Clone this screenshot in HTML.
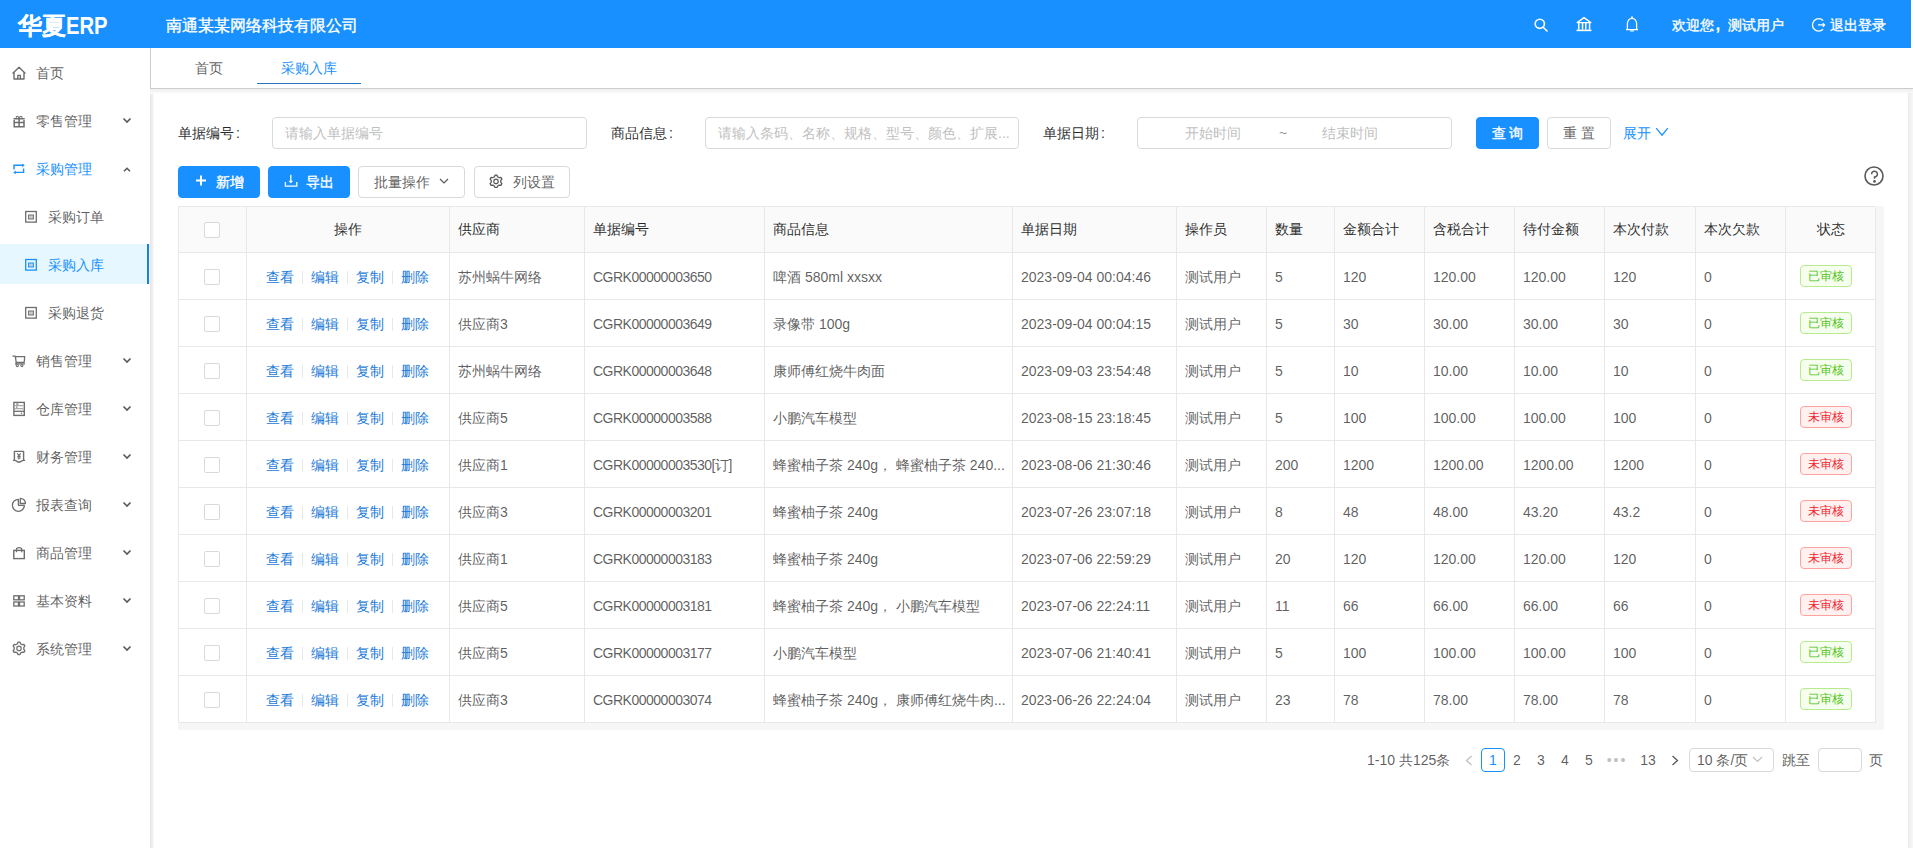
<!DOCTYPE html><html><head><meta charset="utf-8"><style>
*{box-sizing:border-box;margin:0;padding:0}
html,body{width:1913px;height:848px;overflow:hidden;background:#fff;font-family:"Liberation Sans", sans-serif;font-size:14px;color:rgba(0,0,0,.65)}
.abs{position:absolute}
.hdr{left:0;top:0;width:1911px;height:48px;background:#1890ff;color:#fff}
.logo{left:18px;top:11px;font-size:22px;font-weight:bold;line-height:30px;white-space:nowrap}
.company{left:166px;top:15px;font-size:16px;line-height:22px;white-space:nowrap;-webkit-text-stroke:0.35px #fff}
.htxt{top:15px;font-size:14px;line-height:20px;white-space:nowrap;-webkit-text-stroke:0.35px #fff}
.side{left:0;top:48px;width:150px;height:800px;background:#fff}
.mi{left:0;width:150px;height:40px;line-height:40px;white-space:nowrap;color:rgba(0,0,0,.65)}
.mi .ic{position:absolute;left:12px;top:13px;width:14px;height:15px;overflow:visible}
.mi .tx{position:absolute;left:36px;top:1px}
.mi .ar{position:absolute;left:122px;top:16px;width:10px;height:8px;overflow:visible}
.mi.sub .ic{left:24px}
.mi.sub .tx{left:48px}
.mi.act{background:#e6f7ff;color:#1890ff}
.mi.act:after{content:"";position:absolute;right:1px;top:0;width:2px;height:40px;background:#1c7fe0}
.tabs{left:150px;top:48px;width:1763px;height:41px;background:#fff;border-left:1px solid #ccc;border-bottom:1px solid #ccc}
.tab{top:10px;font-size:14px;line-height:20px;white-space:nowrap}
.content{left:151px;top:89px;width:1762px;height:759px;background:#f2f2f2}
.card{left:154px;top:93px;width:1754px;height:755px;background:#fff}
.lbl{top:123px;line-height:20px;color:rgba(0,0,0,.85);white-space:nowrap}
.inp{top:117px;height:32px;border:1px solid #d9d9d9;border-radius:4px;background:#fff}
.ph{position:absolute;top:5px;line-height:20px;color:#bfbfbf;white-space:nowrap}
.btn{height:32px;border-radius:4px;line-height:30px;text-align:center;white-space:nowrap;font-size:14px}
.btn.pri{background:#1890ff;border:1px solid #1890ff;color:#fff;-webkit-text-stroke:0.35px #fff}
.btn.def{background:#fff;border:1px solid #d9d9d9;color:rgba(0,0,0,.65)}
.tbl{left:178px;top:206px}
.cell{position:absolute;border-right:1px solid #e8e8e8;border-bottom:1px solid #e8e8e8;white-space:nowrap;overflow:hidden;line-height:20px}
.th{background:#fafafa;color:rgba(0,0,0,.85)}
.cb{position:absolute;width:16px;height:16px;border:1px solid #d9d9d9;border-radius:2px;background:#fff}
.lnk{color:#1a7ad9}
.dv{display:inline-block;width:1px;height:13px;background:#e8e8e8;margin:0 8px;vertical-align:-2px}
.tag{position:absolute;height:22px;width:52px;line-height:20px;font-size:12px;text-align:center;border-radius:4px;border:1px solid}
.tag.ok{color:#52c41a;background:#f6ffed;border-color:#b7eb8f}
.tag.no{color:#f5222d;background:#fff1f0;border-color:#ffa39e}
.pg{top:750px;line-height:20px;white-space:nowrap;color:rgba(0,0,0,.65)}
</style></head><body>
<div class="abs hdr">
<div class="abs logo"><span style="font-size:24px;font-weight:900;-webkit-text-stroke:0.15px #fff">华夏</span><span style="display:inline-block;font-size:23px;transform:scaleX(0.88);transform-origin:0 0">ERP</span></div>
<div class="abs company">南通某某网络科技有限公司</div>
<svg class="abs" style="left:1534px;top:18px" width="14" height="14" viewBox="0 0 14 14" fill="none" stroke="#fff" stroke-width="1.6"><circle cx="5.8" cy="5.8" r="4.6"/><path d="M9.2 9.2L13 13" stroke-linecap="round"/></svg>
<svg class="abs" style="left:1576px;top:16px" width="16" height="16" viewBox="0 0 16 16" fill="#fff"><path d="M1.2 6.6L8 1.6L14.8 6.6Z" fill="none" stroke="#fff" stroke-width="1.4" stroke-linejoin="round"/><rect x="2" y="7" width="1.5" height="6.6"/><rect x="5.8" y="7" width="1.5" height="6.6"/><rect x="9" y="7" width="1.5" height="6.6"/><rect x="12.8" y="7" width="1.5" height="6.6"/><rect x="0.6" y="13.6" width="14.8" height="1.6"/></svg>
<svg class="abs" style="left:1625px;top:16px" width="14" height="17" viewBox="0 0 14 17" fill="none" stroke="#fff" stroke-width="1.3"><circle cx="7" cy="1.2" r="0.9" fill="#fff" stroke="none"/><path d="M2.4 13.3V7.6A4.6 5.2 0 0 1 11.6 7.6V13.3 M1 13.7H13" stroke-linejoin="round"/><rect x="5.2" y="14.2" width="3.6" height="1.5" fill="rgba(255,255,255,.75)" stroke="none"/></svg>
<div class="abs htxt" style="left:1672px">欢迎您<span style="display:inline-block;width:14px;padding-left:2px;font-weight:bold">,</span>测试用户</div>
<svg class="abs" style="left:1811px;top:18px" width="15" height="14" viewBox="0 0 15 14" fill="none" stroke="#fff" stroke-width="1.3"><path d="M12.08 2.52A6.2 6.2 0 1 0 12.08 11.28"/><path d="M7 6.9H13.6 M11.7 5.1L13.6 6.9L11.7 8.7" stroke-width="1.2"/></svg>
<div class="abs htxt" style="left:1830px">退出登录</div>
</div>
<div class="abs side">
<div class="abs mi" style="top:4px"><svg class="ic" viewBox="0 0 14 15" fill="none" stroke="#6e6e6e" stroke-width="1.2"><path d="M0.6 8.6L7 2.2L13.4 8.6 M2 7.6V14H12V7.6 M5.8 14V10.4H8.4V14" stroke-linejoin="round" stroke-width="1.4"/></svg><span class="tx">首页</span></div>
<div class="abs mi" style="top:52px"><svg class="ic" viewBox="0 0 14 15" fill="none" stroke="#6e6e6e" stroke-width="1.2"><path d="M1.5 5.8H12.7 M2.2 7V13.8H12V7 M7.1 5.2V13.8 M2.2 9.6H12" stroke-width="1.5"/><path d="M7.1 5C6.2 2.6 3.8 2.6 4.4 4.9 M7.1 5C8 2.6 10.4 2.6 9.8 4.9" stroke-width="1.1"/></svg><span class="tx">零售管理</span><svg class="ar" viewBox="0 0 10 8" fill="none" stroke="#595959" stroke-width="1.6"><path d="M1.5 2.5L5 6L8.5 2.5"/></svg></div>
<div class="abs mi" style="top:100px;color:#1890ff"><svg class="ic" viewBox="0 0 14 15" fill="none" stroke="#1890ff" stroke-width="1.2"><path d="M2 8.6V4.3H10.6 M11.6 7.4V11.4H3.4" stroke-width="1.4"/><path d="M10.2 2.4L12.8 4.3L10.2 6.2Z M3.8 9.5L1.2 11.4L3.8 13.3Z" fill="#1890ff" stroke="none"/></svg><span class="tx">采购管理</span><svg class="ar" viewBox="0 0 10 8" fill="none" stroke="#595959" stroke-width="1.6"><path d="M2 7.3L5 4.3L8 7.3"/></svg></div>
<div class="abs mi sub" style="top:148px"><svg class="ic" viewBox="0 0 14 15" fill="none" stroke="#6e6e6e" stroke-width="1.2"><rect x="1.7" y="2.5" width="10.6" height="10.6" stroke-width="1.3"/><rect x="4.6" y="6" width="4.8" height="4" stroke-width="1" fill="#ccc"/></svg><span class="tx">采购订单</span></div>
<div class="abs mi sub act" style="top:196px;color:#1890ff"><svg class="ic" viewBox="0 0 14 15" fill="none" stroke="#1890ff" stroke-width="1.2"><rect x="1.7" y="2.5" width="10.6" height="10.6" stroke-width="1.3"/><rect x="4.6" y="6" width="4.8" height="4" stroke-width="1" fill="#ccc"/></svg><span class="tx">采购入库</span></div>
<div class="abs mi sub" style="top:244px"><svg class="ic" viewBox="0 0 14 15" fill="none" stroke="#6e6e6e" stroke-width="1.2"><rect x="1.7" y="2.5" width="10.6" height="10.6" stroke-width="1.3"/><rect x="4.6" y="6" width="4.8" height="4" stroke-width="1" fill="#ccc"/></svg><span class="tx">采购退货</span></div>
<div class="abs mi" style="top:292px"><svg class="ic" viewBox="0 0 14 15" fill="none" stroke="#6e6e6e" stroke-width="1.2"><path d="M0.5 3.1H3.3L4.4 10.9 M3.6 3.6H12.7L12.2 9.3H4.5 M3 10.9H13" stroke-width="1.3" stroke-linejoin="round"/><circle cx="5.3" cy="12.6" r="1.1" stroke-width="1.1"/><circle cx="9.9" cy="12.6" r="1.1" stroke-width="1.1"/></svg><span class="tx">销售管理</span><svg class="ar" viewBox="0 0 10 8" fill="none" stroke="#595959" stroke-width="1.6"><path d="M1.5 2.5L5 6L8.5 2.5"/></svg></div>
<div class="abs mi" style="top:340px"><svg class="ic" viewBox="0 0 14 15" fill="none" stroke="#6e6e6e" stroke-width="1.2"><rect x="1.9" y="1.4" width="10.4" height="13" stroke-width="1.4"/><path d="M1.9 10.3H12.3" stroke-width="1.3"/><path d="M2.8 4.6H11.4 M2.8 7.6H11.4" stroke="#aaa" stroke-width="1.1"/><path d="M4 3.1H6.6 M4 6.1H5.6" stroke-width="1"/><circle cx="9.4" cy="12.3" r="0.7" fill="#6e6e6e" stroke="none"/></svg><span class="tx">仓库管理</span><svg class="ar" viewBox="0 0 10 8" fill="none" stroke="#595959" stroke-width="1.6"><path d="M1.5 2.5L5 6L8.5 2.5"/></svg></div>
<div class="abs mi" style="top:388px"><svg class="ic" viewBox="0 0 14 15" fill="none" stroke="#6e6e6e" stroke-width="1.2"><path d="M2.4 11.4V2.4H11.6V11.4 M0.9 11.4H2.4C4.5 11.6 5.5 13.2 7 13.2C8.5 13.2 9.5 11.6 11.6 11.4H13.1" stroke-width="1.4" stroke-linejoin="round"/><path d="M5.3 4.3L7 6.6L8.7 4.3 M5.4 7.4H8.6 M5.4 9H8.6 M7 6.6V10.4" stroke-width="1.1"/></svg><span class="tx">财务管理</span><svg class="ar" viewBox="0 0 10 8" fill="none" stroke="#595959" stroke-width="1.6"><path d="M1.5 2.5L5 6L8.5 2.5"/></svg></div>
<div class="abs mi" style="top:436px"><svg class="ic" viewBox="0 0 14 15" fill="none" stroke="#6e6e6e" stroke-width="1.2"><path d="M6.4 2.3A6 6 0 1 0 12.4 8.3H6.4Z" stroke-width="1.3" stroke-linejoin="round"/><path d="M8.3 1.3V6.5H13.5A5.2 5.2 0 0 0 8.3 1.3Z" stroke-width="1.3" stroke-linejoin="round"/></svg><span class="tx">报表查询</span><svg class="ar" viewBox="0 0 10 8" fill="none" stroke="#595959" stroke-width="1.6"><path d="M1.5 2.5L5 6L8.5 2.5"/></svg></div>
<div class="abs mi" style="top:484px"><svg class="ic" viewBox="0 0 14 15" fill="none" stroke="#6e6e6e" stroke-width="1.2"><rect x="1.8" y="5.4" width="10.5" height="8.2" stroke-width="1.4"/><path d="M4.5 7.2V4.5C4.5 2 9.7 2 9.7 4.5V7.2" stroke-width="1.3"/></svg><span class="tx">商品管理</span><svg class="ar" viewBox="0 0 10 8" fill="none" stroke="#595959" stroke-width="1.6"><path d="M1.5 2.5L5 6L8.5 2.5"/></svg></div>
<div class="abs mi" style="top:532px"><svg class="ic" viewBox="0 0 14 15" fill="none" stroke="#6e6e6e" stroke-width="1.2"><rect x="1.8" y="2.8" width="4.7" height="4" stroke-width="1.3"/><rect x="7.5" y="2.8" width="4.7" height="4" stroke-width="1.3"/><rect x="1.8" y="9" width="4.7" height="4" stroke-width="1.3"/><rect x="7.5" y="9" width="4.7" height="4" stroke-width="1.3"/></svg><span class="tx">基本资料</span><svg class="ar" viewBox="0 0 10 8" fill="none" stroke="#595959" stroke-width="1.6"><path d="M1.5 2.5L5 6L8.5 2.5"/></svg></div>
<div class="abs mi" style="top:580px"><svg class="ic" viewBox="0 0 14 15" fill="none" stroke="#6e6e6e" stroke-width="1.2"><path d="M5.44 2.76 L6.01 1.18 L7.99 1.18 L8.56 2.76 L10.24 3.72 L11.90 3.44 L12.88 5.14 L11.80 6.43 L11.80 8.37 L12.88 9.66 L11.90 11.36 L10.24 11.08 L8.56 12.04 L7.99 13.62 L6.01 13.62 L5.44 12.04 L3.76 11.08 L2.10 11.36 L1.12 9.66 L2.20 8.37 L2.20 6.43 L1.12 5.14 L2.10 3.44 L3.76 3.72Z" stroke-width="1.3" stroke-linejoin="round"/><circle cx="7" cy="7.4" r="2.2" stroke-width="1.2"/></svg><span class="tx">系统管理</span><svg class="ar" viewBox="0 0 10 8" fill="none" stroke="#595959" stroke-width="1.6"><path d="M1.5 2.5L5 6L8.5 2.5"/></svg></div>
</div>
<div class="abs tabs"></div>
<div class="abs tab" style="left:195px;top:58px;color:rgba(0,0,0,.65)">首页</div>
<div class="abs tab" style="left:281px;top:58px;color:#1890ff">采购入库</div>
<div class="abs" style="left:257px;top:83px;width:104px;height:1px;background:#2a76c0"></div>
<div class="abs content"></div>
<div class="abs" style="left:150px;top:89px;width:5px;height:759px;background:linear-gradient(90deg,#e4e4e4,#f4f4f4 60%,#fdfdfd)"></div>
<div class="abs" style="left:150px;top:89px;width:1763px;height:5px;background:linear-gradient(180deg,#f0f0f0,#f6f6f6 60%,#fdfdfd)"></div>
<div class="abs card"></div>
<div class="abs" style="left:1908px;top:93px;width:5px;height:755px;background:linear-gradient(90deg,#ebebeb,#f3f3f3 60%,#f7f7f7)"></div>
<div class="abs lbl" style="left:178px">单据编号<span style="margin-left:2px">:</span></div>
<div class="abs inp" style="left:272px;width:315px"><span class="ph" style="left:12px">请输入单据编号</span></div>
<div class="abs lbl" style="left:611px">商品信息<span style="margin-left:2px">:</span></div>
<div class="abs inp" style="left:705px;width:314px"><span class="ph" style="left:12px">请输入条码、名称、规格、型号、颜色、扩展...</span></div>
<div class="abs lbl" style="left:1043px">单据日期<span style="margin-left:2px">:</span></div>
<div class="abs inp" style="left:1137px;width:315px"><span class="ph" style="left:47px">开始时间</span><span class="ph" style="left:141px;color:rgba(0,0,0,.45)">~</span><span class="ph" style="left:184px">结束时间</span></div>
<div class="abs btn pri" style="left:1476px;top:117px;width:63px">查 询</div>
<div class="abs btn def" style="left:1547px;top:117px;width:64px">重 置</div>
<div class="abs lbl" style="left:1623px;color:#1890ff">展开</div>
<svg class="abs" style="left:1655px;top:127px" width="14" height="10" viewBox="0 0 14 10" fill="none" stroke="#1890ff" stroke-width="1.3"><path d="M1.2 1.2L7 8.2L12.8 1.2"/></svg>
<div class="abs btn pri" style="left:178px;top:166px;width:82px"></div>
<svg class="abs" style="left:196px;top:175px" width="10" height="11" viewBox="0 0 10 11" fill="none" stroke="#fff" stroke-width="2"><path d="M5 0.5V10.5 M0 5.5H10"/></svg>
<div class="abs" style="left:216px;top:172px;color:#fff;line-height:20px;-webkit-text-stroke:0.35px #fff">新增</div>
<div class="abs btn pri" style="left:268px;top:166px;width:82px"></div>
<svg class="abs" style="left:284px;top:174px" width="14" height="14" viewBox="0 0 14 14" fill="none" stroke="#fff" stroke-width="1.3"><path d="M6.8 0.8V8.2 M5.2 6.9L6.8 8.4L8.4 6.9 M1.4 8V12.2H12.8V8"/></svg>
<div class="abs" style="left:306px;top:172px;color:#fff;line-height:20px;-webkit-text-stroke:0.35px #fff">导出</div>
<div class="abs btn def" style="left:358px;top:166px;width:107px;text-align:left;padding-left:15px">批量操作</div>
<svg class="abs" style="left:439px;top:178px" width="10" height="7" viewBox="0 0 10 7" fill="none" stroke="#595959" stroke-width="1.2"><path d="M1 1L5 5L9 1"/></svg>
<div class="abs btn def" style="left:474px;top:166px;width:96px;text-align:left;padding-left:38px">列设置</div>
<svg class="abs" style="left:489px;top:174px" width="14" height="14" viewBox="0 0 14 14" fill="none" stroke="#595959" stroke-width="1.1"><path d="M5.44 2.76 L6.01 1.18 L7.99 1.18 L8.56 2.76 L10.24 3.72 L11.90 3.44 L12.88 5.14 L11.80 6.43 L11.80 8.37 L12.88 9.66 L11.90 11.36 L10.24 11.08 L8.56 12.04 L7.99 13.62 L6.01 13.62 L5.44 12.04 L3.76 11.08 L2.10 11.36 L1.12 9.66 L2.20 8.37 L2.20 6.43 L1.12 5.14 L2.10 3.44 L3.76 3.72Z" stroke-width="1.3" stroke-linejoin="round"/><circle cx="7" cy="7.4" r="2.2" stroke-width="1.2"/></svg>
<svg class="abs" style="left:1864px;top:166px" width="21" height="21" viewBox="0 0 21 21" fill="none" stroke="#595959" stroke-width="1.6"><circle cx="10" cy="10" r="9"/><path d="M7.6 8.2A2.9 2.9 0 1 1 10.5 11V12.8" stroke-width="1.5"/><circle cx="10.5" cy="15.4" r="0.6" fill="#595959"/></svg>
<div class="abs" style="left:178px;top:206px;width:1706px;height:524px;background:#f6f6f6"></div>
<div class="abs" style="left:178px;top:206px;width:1697px;height:516px;background:#fff;border-left:1px solid #e8e8e8;border-top:1px solid #e8e8e8"></div>
<div class="cell th" style="left:179px;top:207px;width:68px;height:46px;"><div class="cb" style="left:25px;top:15px"></div></div>
<div class="cell th" style="left:247px;top:207px;width:203px;height:46px;text-align:center;padding-top:12px">操作</div>
<div class="cell th" style="left:450px;top:207px;width:135px;height:46px;padding-left:8px;padding-top:12px">供应商</div>
<div class="cell th" style="left:585px;top:207px;width:180px;height:46px;padding-left:8px;padding-top:12px">单据编号</div>
<div class="cell th" style="left:765px;top:207px;width:248px;height:46px;padding-left:8px;padding-top:12px">商品信息</div>
<div class="cell th" style="left:1013px;top:207px;width:164px;height:46px;padding-left:8px;padding-top:12px">单据日期</div>
<div class="cell th" style="left:1177px;top:207px;width:90px;height:46px;padding-left:8px;padding-top:12px">操作员</div>
<div class="cell th" style="left:1267px;top:207px;width:68px;height:46px;padding-left:8px;padding-top:12px">数量</div>
<div class="cell th" style="left:1335px;top:207px;width:90px;height:46px;padding-left:8px;padding-top:12px">金额合计</div>
<div class="cell th" style="left:1425px;top:207px;width:90px;height:46px;padding-left:8px;padding-top:12px">含税合计</div>
<div class="cell th" style="left:1515px;top:207px;width:90px;height:46px;padding-left:8px;padding-top:12px">待付金额</div>
<div class="cell th" style="left:1605px;top:207px;width:91px;height:46px;padding-left:8px;padding-top:12px">本次付款</div>
<div class="cell th" style="left:1696px;top:207px;width:90px;height:46px;padding-left:8px;padding-top:12px">本次欠款</div>
<div class="cell th" style="left:1786px;top:207px;width:90px;height:46px;text-align:center;padding-top:12px">状态</div>
<div class="cell" style="left:179px;top:253px;width:68px;height:47px;"><div class="cb" style="left:25px;top:16px"></div></div>
<div class="cell" style="left:247px;top:253px;width:203px;height:47px;padding-left:19px;padding-top:14px"><span class="lnk">查看</span><i class="dv"></i><span class="lnk">编辑</span><i class="dv"></i><span class="lnk">复制</span><i class="dv"></i><span class="lnk">删除</span></div>
<div class="cell" style="left:450px;top:253px;width:135px;height:47px;padding-left:8px;padding-top:14px">苏州蜗牛网络</div>
<div class="cell" style="left:585px;top:253px;width:180px;height:47px;padding-left:8px;padding-top:14px;letter-spacing:-0.5px">CGRK00000003650</div>
<div class="cell" style="left:765px;top:253px;width:248px;height:47px;padding-left:8px;padding-top:14px">啤酒 580ml xxsxx</div>
<div class="cell" style="left:1013px;top:253px;width:164px;height:47px;padding-left:8px;padding-top:14px">2023-09-04 00:04:46</div>
<div class="cell" style="left:1177px;top:253px;width:90px;height:47px;padding-left:8px;padding-top:14px">测试用户</div>
<div class="cell" style="left:1267px;top:253px;width:68px;height:47px;padding-left:8px;padding-top:14px">5</div>
<div class="cell" style="left:1335px;top:253px;width:90px;height:47px;padding-left:8px;padding-top:14px">120</div>
<div class="cell" style="left:1425px;top:253px;width:90px;height:47px;padding-left:8px;padding-top:14px">120.00</div>
<div class="cell" style="left:1515px;top:253px;width:90px;height:47px;padding-left:8px;padding-top:14px">120.00</div>
<div class="cell" style="left:1605px;top:253px;width:91px;height:47px;padding-left:8px;padding-top:14px">120</div>
<div class="cell" style="left:1696px;top:253px;width:90px;height:47px;padding-left:8px;padding-top:14px">0</div>
<div class="cell" style="left:1786px;top:253px;width:90px;height:47px;"><div class="tag ok" style="left:14px;top:12px">已审核</div></div>
<div class="cell" style="left:179px;top:300px;width:68px;height:47px;"><div class="cb" style="left:25px;top:16px"></div></div>
<div class="cell" style="left:247px;top:300px;width:203px;height:47px;padding-left:19px;padding-top:14px"><span class="lnk">查看</span><i class="dv"></i><span class="lnk">编辑</span><i class="dv"></i><span class="lnk">复制</span><i class="dv"></i><span class="lnk">删除</span></div>
<div class="cell" style="left:450px;top:300px;width:135px;height:47px;padding-left:8px;padding-top:14px">供应商3</div>
<div class="cell" style="left:585px;top:300px;width:180px;height:47px;padding-left:8px;padding-top:14px;letter-spacing:-0.5px">CGRK00000003649</div>
<div class="cell" style="left:765px;top:300px;width:248px;height:47px;padding-left:8px;padding-top:14px">录像带 100g</div>
<div class="cell" style="left:1013px;top:300px;width:164px;height:47px;padding-left:8px;padding-top:14px">2023-09-04 00:04:15</div>
<div class="cell" style="left:1177px;top:300px;width:90px;height:47px;padding-left:8px;padding-top:14px">测试用户</div>
<div class="cell" style="left:1267px;top:300px;width:68px;height:47px;padding-left:8px;padding-top:14px">5</div>
<div class="cell" style="left:1335px;top:300px;width:90px;height:47px;padding-left:8px;padding-top:14px">30</div>
<div class="cell" style="left:1425px;top:300px;width:90px;height:47px;padding-left:8px;padding-top:14px">30.00</div>
<div class="cell" style="left:1515px;top:300px;width:90px;height:47px;padding-left:8px;padding-top:14px">30.00</div>
<div class="cell" style="left:1605px;top:300px;width:91px;height:47px;padding-left:8px;padding-top:14px">30</div>
<div class="cell" style="left:1696px;top:300px;width:90px;height:47px;padding-left:8px;padding-top:14px">0</div>
<div class="cell" style="left:1786px;top:300px;width:90px;height:47px;"><div class="tag ok" style="left:14px;top:12px">已审核</div></div>
<div class="cell" style="left:179px;top:347px;width:68px;height:47px;"><div class="cb" style="left:25px;top:16px"></div></div>
<div class="cell" style="left:247px;top:347px;width:203px;height:47px;padding-left:19px;padding-top:14px"><span class="lnk">查看</span><i class="dv"></i><span class="lnk">编辑</span><i class="dv"></i><span class="lnk">复制</span><i class="dv"></i><span class="lnk">删除</span></div>
<div class="cell" style="left:450px;top:347px;width:135px;height:47px;padding-left:8px;padding-top:14px">苏州蜗牛网络</div>
<div class="cell" style="left:585px;top:347px;width:180px;height:47px;padding-left:8px;padding-top:14px;letter-spacing:-0.5px">CGRK00000003648</div>
<div class="cell" style="left:765px;top:347px;width:248px;height:47px;padding-left:8px;padding-top:14px">康师傅红烧牛肉面</div>
<div class="cell" style="left:1013px;top:347px;width:164px;height:47px;padding-left:8px;padding-top:14px">2023-09-03 23:54:48</div>
<div class="cell" style="left:1177px;top:347px;width:90px;height:47px;padding-left:8px;padding-top:14px">测试用户</div>
<div class="cell" style="left:1267px;top:347px;width:68px;height:47px;padding-left:8px;padding-top:14px">5</div>
<div class="cell" style="left:1335px;top:347px;width:90px;height:47px;padding-left:8px;padding-top:14px">10</div>
<div class="cell" style="left:1425px;top:347px;width:90px;height:47px;padding-left:8px;padding-top:14px">10.00</div>
<div class="cell" style="left:1515px;top:347px;width:90px;height:47px;padding-left:8px;padding-top:14px">10.00</div>
<div class="cell" style="left:1605px;top:347px;width:91px;height:47px;padding-left:8px;padding-top:14px">10</div>
<div class="cell" style="left:1696px;top:347px;width:90px;height:47px;padding-left:8px;padding-top:14px">0</div>
<div class="cell" style="left:1786px;top:347px;width:90px;height:47px;"><div class="tag ok" style="left:14px;top:12px">已审核</div></div>
<div class="cell" style="left:179px;top:394px;width:68px;height:47px;"><div class="cb" style="left:25px;top:16px"></div></div>
<div class="cell" style="left:247px;top:394px;width:203px;height:47px;padding-left:19px;padding-top:14px"><span class="lnk">查看</span><i class="dv"></i><span class="lnk">编辑</span><i class="dv"></i><span class="lnk">复制</span><i class="dv"></i><span class="lnk">删除</span></div>
<div class="cell" style="left:450px;top:394px;width:135px;height:47px;padding-left:8px;padding-top:14px">供应商5</div>
<div class="cell" style="left:585px;top:394px;width:180px;height:47px;padding-left:8px;padding-top:14px;letter-spacing:-0.5px">CGRK00000003588</div>
<div class="cell" style="left:765px;top:394px;width:248px;height:47px;padding-left:8px;padding-top:14px">小鹏汽车模型</div>
<div class="cell" style="left:1013px;top:394px;width:164px;height:47px;padding-left:8px;padding-top:14px">2023-08-15 23:18:45</div>
<div class="cell" style="left:1177px;top:394px;width:90px;height:47px;padding-left:8px;padding-top:14px">测试用户</div>
<div class="cell" style="left:1267px;top:394px;width:68px;height:47px;padding-left:8px;padding-top:14px">5</div>
<div class="cell" style="left:1335px;top:394px;width:90px;height:47px;padding-left:8px;padding-top:14px">100</div>
<div class="cell" style="left:1425px;top:394px;width:90px;height:47px;padding-left:8px;padding-top:14px">100.00</div>
<div class="cell" style="left:1515px;top:394px;width:90px;height:47px;padding-left:8px;padding-top:14px">100.00</div>
<div class="cell" style="left:1605px;top:394px;width:91px;height:47px;padding-left:8px;padding-top:14px">100</div>
<div class="cell" style="left:1696px;top:394px;width:90px;height:47px;padding-left:8px;padding-top:14px">0</div>
<div class="cell" style="left:1786px;top:394px;width:90px;height:47px;"><div class="tag no" style="left:14px;top:12px">未审核</div></div>
<div class="cell" style="left:179px;top:441px;width:68px;height:47px;"><div class="cb" style="left:25px;top:16px"></div></div>
<div class="cell" style="left:247px;top:441px;width:203px;height:47px;padding-left:19px;padding-top:14px"><span class="lnk">查看</span><i class="dv"></i><span class="lnk">编辑</span><i class="dv"></i><span class="lnk">复制</span><i class="dv"></i><span class="lnk">删除</span></div>
<div class="cell" style="left:450px;top:441px;width:135px;height:47px;padding-left:8px;padding-top:14px">供应商1</div>
<div class="cell" style="left:585px;top:441px;width:180px;height:47px;padding-left:8px;padding-top:14px;letter-spacing:-0.5px">CGRK00000003530[订]</div>
<div class="cell" style="left:765px;top:441px;width:248px;height:47px;padding-left:8px;padding-top:14px">蜂蜜柚子茶 240g， 蜂蜜柚子茶 240...</div>
<div class="cell" style="left:1013px;top:441px;width:164px;height:47px;padding-left:8px;padding-top:14px">2023-08-06 21:30:46</div>
<div class="cell" style="left:1177px;top:441px;width:90px;height:47px;padding-left:8px;padding-top:14px">测试用户</div>
<div class="cell" style="left:1267px;top:441px;width:68px;height:47px;padding-left:8px;padding-top:14px">200</div>
<div class="cell" style="left:1335px;top:441px;width:90px;height:47px;padding-left:8px;padding-top:14px">1200</div>
<div class="cell" style="left:1425px;top:441px;width:90px;height:47px;padding-left:8px;padding-top:14px">1200.00</div>
<div class="cell" style="left:1515px;top:441px;width:90px;height:47px;padding-left:8px;padding-top:14px">1200.00</div>
<div class="cell" style="left:1605px;top:441px;width:91px;height:47px;padding-left:8px;padding-top:14px">1200</div>
<div class="cell" style="left:1696px;top:441px;width:90px;height:47px;padding-left:8px;padding-top:14px">0</div>
<div class="cell" style="left:1786px;top:441px;width:90px;height:47px;"><div class="tag no" style="left:14px;top:12px">未审核</div></div>
<div class="cell" style="left:179px;top:488px;width:68px;height:47px;"><div class="cb" style="left:25px;top:16px"></div></div>
<div class="cell" style="left:247px;top:488px;width:203px;height:47px;padding-left:19px;padding-top:14px"><span class="lnk">查看</span><i class="dv"></i><span class="lnk">编辑</span><i class="dv"></i><span class="lnk">复制</span><i class="dv"></i><span class="lnk">删除</span></div>
<div class="cell" style="left:450px;top:488px;width:135px;height:47px;padding-left:8px;padding-top:14px">供应商3</div>
<div class="cell" style="left:585px;top:488px;width:180px;height:47px;padding-left:8px;padding-top:14px;letter-spacing:-0.5px">CGRK00000003201</div>
<div class="cell" style="left:765px;top:488px;width:248px;height:47px;padding-left:8px;padding-top:14px">蜂蜜柚子茶 240g</div>
<div class="cell" style="left:1013px;top:488px;width:164px;height:47px;padding-left:8px;padding-top:14px">2023-07-26 23:07:18</div>
<div class="cell" style="left:1177px;top:488px;width:90px;height:47px;padding-left:8px;padding-top:14px">测试用户</div>
<div class="cell" style="left:1267px;top:488px;width:68px;height:47px;padding-left:8px;padding-top:14px">8</div>
<div class="cell" style="left:1335px;top:488px;width:90px;height:47px;padding-left:8px;padding-top:14px">48</div>
<div class="cell" style="left:1425px;top:488px;width:90px;height:47px;padding-left:8px;padding-top:14px">48.00</div>
<div class="cell" style="left:1515px;top:488px;width:90px;height:47px;padding-left:8px;padding-top:14px">43.20</div>
<div class="cell" style="left:1605px;top:488px;width:91px;height:47px;padding-left:8px;padding-top:14px">43.2</div>
<div class="cell" style="left:1696px;top:488px;width:90px;height:47px;padding-left:8px;padding-top:14px">0</div>
<div class="cell" style="left:1786px;top:488px;width:90px;height:47px;"><div class="tag no" style="left:14px;top:12px">未审核</div></div>
<div class="cell" style="left:179px;top:535px;width:68px;height:47px;"><div class="cb" style="left:25px;top:16px"></div></div>
<div class="cell" style="left:247px;top:535px;width:203px;height:47px;padding-left:19px;padding-top:14px"><span class="lnk">查看</span><i class="dv"></i><span class="lnk">编辑</span><i class="dv"></i><span class="lnk">复制</span><i class="dv"></i><span class="lnk">删除</span></div>
<div class="cell" style="left:450px;top:535px;width:135px;height:47px;padding-left:8px;padding-top:14px">供应商1</div>
<div class="cell" style="left:585px;top:535px;width:180px;height:47px;padding-left:8px;padding-top:14px;letter-spacing:-0.5px">CGRK00000003183</div>
<div class="cell" style="left:765px;top:535px;width:248px;height:47px;padding-left:8px;padding-top:14px">蜂蜜柚子茶 240g</div>
<div class="cell" style="left:1013px;top:535px;width:164px;height:47px;padding-left:8px;padding-top:14px">2023-07-06 22:59:29</div>
<div class="cell" style="left:1177px;top:535px;width:90px;height:47px;padding-left:8px;padding-top:14px">测试用户</div>
<div class="cell" style="left:1267px;top:535px;width:68px;height:47px;padding-left:8px;padding-top:14px">20</div>
<div class="cell" style="left:1335px;top:535px;width:90px;height:47px;padding-left:8px;padding-top:14px">120</div>
<div class="cell" style="left:1425px;top:535px;width:90px;height:47px;padding-left:8px;padding-top:14px">120.00</div>
<div class="cell" style="left:1515px;top:535px;width:90px;height:47px;padding-left:8px;padding-top:14px">120.00</div>
<div class="cell" style="left:1605px;top:535px;width:91px;height:47px;padding-left:8px;padding-top:14px">120</div>
<div class="cell" style="left:1696px;top:535px;width:90px;height:47px;padding-left:8px;padding-top:14px">0</div>
<div class="cell" style="left:1786px;top:535px;width:90px;height:47px;"><div class="tag no" style="left:14px;top:12px">未审核</div></div>
<div class="cell" style="left:179px;top:582px;width:68px;height:47px;"><div class="cb" style="left:25px;top:16px"></div></div>
<div class="cell" style="left:247px;top:582px;width:203px;height:47px;padding-left:19px;padding-top:14px"><span class="lnk">查看</span><i class="dv"></i><span class="lnk">编辑</span><i class="dv"></i><span class="lnk">复制</span><i class="dv"></i><span class="lnk">删除</span></div>
<div class="cell" style="left:450px;top:582px;width:135px;height:47px;padding-left:8px;padding-top:14px">供应商5</div>
<div class="cell" style="left:585px;top:582px;width:180px;height:47px;padding-left:8px;padding-top:14px;letter-spacing:-0.5px">CGRK00000003181</div>
<div class="cell" style="left:765px;top:582px;width:248px;height:47px;padding-left:8px;padding-top:14px">蜂蜜柚子茶 240g， 小鹏汽车模型</div>
<div class="cell" style="left:1013px;top:582px;width:164px;height:47px;padding-left:8px;padding-top:14px">2023-07-06 22:24:11</div>
<div class="cell" style="left:1177px;top:582px;width:90px;height:47px;padding-left:8px;padding-top:14px">测试用户</div>
<div class="cell" style="left:1267px;top:582px;width:68px;height:47px;padding-left:8px;padding-top:14px">11</div>
<div class="cell" style="left:1335px;top:582px;width:90px;height:47px;padding-left:8px;padding-top:14px">66</div>
<div class="cell" style="left:1425px;top:582px;width:90px;height:47px;padding-left:8px;padding-top:14px">66.00</div>
<div class="cell" style="left:1515px;top:582px;width:90px;height:47px;padding-left:8px;padding-top:14px">66.00</div>
<div class="cell" style="left:1605px;top:582px;width:91px;height:47px;padding-left:8px;padding-top:14px">66</div>
<div class="cell" style="left:1696px;top:582px;width:90px;height:47px;padding-left:8px;padding-top:14px">0</div>
<div class="cell" style="left:1786px;top:582px;width:90px;height:47px;"><div class="tag no" style="left:14px;top:12px">未审核</div></div>
<div class="cell" style="left:179px;top:629px;width:68px;height:47px;"><div class="cb" style="left:25px;top:16px"></div></div>
<div class="cell" style="left:247px;top:629px;width:203px;height:47px;padding-left:19px;padding-top:14px"><span class="lnk">查看</span><i class="dv"></i><span class="lnk">编辑</span><i class="dv"></i><span class="lnk">复制</span><i class="dv"></i><span class="lnk">删除</span></div>
<div class="cell" style="left:450px;top:629px;width:135px;height:47px;padding-left:8px;padding-top:14px">供应商5</div>
<div class="cell" style="left:585px;top:629px;width:180px;height:47px;padding-left:8px;padding-top:14px;letter-spacing:-0.5px">CGRK00000003177</div>
<div class="cell" style="left:765px;top:629px;width:248px;height:47px;padding-left:8px;padding-top:14px">小鹏汽车模型</div>
<div class="cell" style="left:1013px;top:629px;width:164px;height:47px;padding-left:8px;padding-top:14px">2023-07-06 21:40:41</div>
<div class="cell" style="left:1177px;top:629px;width:90px;height:47px;padding-left:8px;padding-top:14px">测试用户</div>
<div class="cell" style="left:1267px;top:629px;width:68px;height:47px;padding-left:8px;padding-top:14px">5</div>
<div class="cell" style="left:1335px;top:629px;width:90px;height:47px;padding-left:8px;padding-top:14px">100</div>
<div class="cell" style="left:1425px;top:629px;width:90px;height:47px;padding-left:8px;padding-top:14px">100.00</div>
<div class="cell" style="left:1515px;top:629px;width:90px;height:47px;padding-left:8px;padding-top:14px">100.00</div>
<div class="cell" style="left:1605px;top:629px;width:91px;height:47px;padding-left:8px;padding-top:14px">100</div>
<div class="cell" style="left:1696px;top:629px;width:90px;height:47px;padding-left:8px;padding-top:14px">0</div>
<div class="cell" style="left:1786px;top:629px;width:90px;height:47px;"><div class="tag ok" style="left:14px;top:12px">已审核</div></div>
<div class="cell" style="left:179px;top:676px;width:68px;height:47px;"><div class="cb" style="left:25px;top:16px"></div></div>
<div class="cell" style="left:247px;top:676px;width:203px;height:47px;padding-left:19px;padding-top:14px"><span class="lnk">查看</span><i class="dv"></i><span class="lnk">编辑</span><i class="dv"></i><span class="lnk">复制</span><i class="dv"></i><span class="lnk">删除</span></div>
<div class="cell" style="left:450px;top:676px;width:135px;height:47px;padding-left:8px;padding-top:14px">供应商3</div>
<div class="cell" style="left:585px;top:676px;width:180px;height:47px;padding-left:8px;padding-top:14px;letter-spacing:-0.5px">CGRK00000003074</div>
<div class="cell" style="left:765px;top:676px;width:248px;height:47px;padding-left:8px;padding-top:14px">蜂蜜柚子茶 240g， 康师傅红烧牛肉...</div>
<div class="cell" style="left:1013px;top:676px;width:164px;height:47px;padding-left:8px;padding-top:14px">2023-06-26 22:24:04</div>
<div class="cell" style="left:1177px;top:676px;width:90px;height:47px;padding-left:8px;padding-top:14px">测试用户</div>
<div class="cell" style="left:1267px;top:676px;width:68px;height:47px;padding-left:8px;padding-top:14px">23</div>
<div class="cell" style="left:1335px;top:676px;width:90px;height:47px;padding-left:8px;padding-top:14px">78</div>
<div class="cell" style="left:1425px;top:676px;width:90px;height:47px;padding-left:8px;padding-top:14px">78.00</div>
<div class="cell" style="left:1515px;top:676px;width:90px;height:47px;padding-left:8px;padding-top:14px">78.00</div>
<div class="cell" style="left:1605px;top:676px;width:91px;height:47px;padding-left:8px;padding-top:14px">78</div>
<div class="cell" style="left:1696px;top:676px;width:90px;height:47px;padding-left:8px;padding-top:14px">0</div>
<div class="cell" style="left:1786px;top:676px;width:90px;height:47px;"><div class="tag ok" style="left:14px;top:12px">已审核</div></div>
<div class="abs pg" style="left:1367px">1-10 共125条</div>
<svg class="abs" style="left:1465px;top:755px" width="8" height="11" viewBox="0 0 8 11" fill="none" stroke="#bfbfbf" stroke-width="1.3"><path d="M6.5 1L1.5 5.5L6.5 10"/></svg>
<div class="abs" style="left:1481px;top:748px;width:24px;height:24px;border:1px solid #1890ff;border-radius:4px;color:#1890ff;text-align:center;line-height:22px">1</div>
<div class="abs pg" style="left:1497px;width:40px;text-align:center">2</div>
<div class="abs pg" style="left:1521px;width:40px;text-align:center">3</div>
<div class="abs pg" style="left:1545px;width:40px;text-align:center">4</div>
<div class="abs pg" style="left:1569px;width:40px;text-align:center">5</div>
<div class="abs pg" style="left:1628px;width:40px;text-align:center">13</div>
<div class="abs pg" style="left:1597px;width:40px;text-align:center;color:#bfbfbf;letter-spacing:2px">•••</div>
<svg class="abs" style="left:1671px;top:755px" width="8" height="11" viewBox="0 0 8 11" fill="none" stroke="#595959" stroke-width="1.3"><path d="M1.5 1L6.5 5.5L1.5 10"/></svg>
<div class="abs" style="left:1689px;top:748px;width:85px;height:24px;border:1px solid #d9d9d9;border-radius:4px;line-height:22px;padding-left:7px;white-space:nowrap">10 条/页</div>
<svg class="abs" style="left:1752px;top:756px" width="11" height="7" viewBox="0 0 11 7" fill="none" stroke="#bfbfbf" stroke-width="1.1"><path d="M1 1L5.5 5.5L10 1"/></svg>
<div class="abs pg" style="left:1782px">跳至</div>
<div class="abs" style="left:1818px;top:748px;width:44px;height:24px;border:1px solid #d9d9d9;border-radius:4px"></div>
<div class="abs pg" style="left:1869px">页</div>
</body></html>
